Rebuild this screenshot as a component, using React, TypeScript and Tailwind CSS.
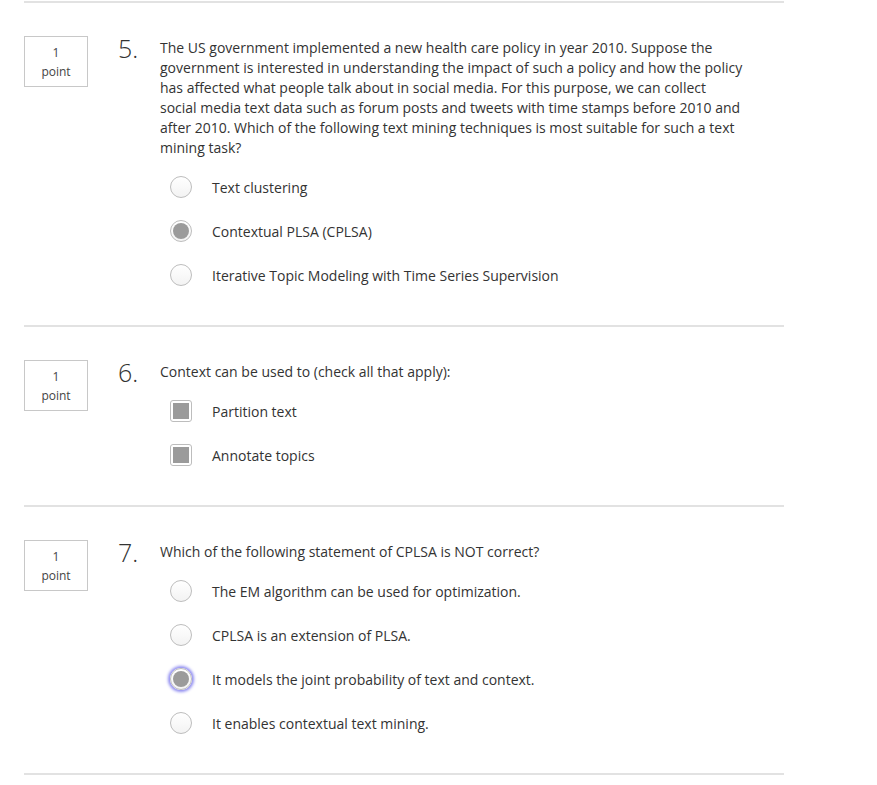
type Option = { label: string; checked?: boolean; focused?: boolean };
type Question = {
  n: number;
  text: string;
  kind: "radio" | "checkbox";
  options: Option[];
};

const questions: Question[] = [
  {
    n: 5,
    text: "The US government implemented a new health care policy in year 2010. Suppose the government is interested in understanding the impact of such a policy and how the policy has affected what people talk about in social media. For this purpose, we can collect social media text data such as forum posts and tweets with time stamps before 2010 and after 2010. Which of the following text mining techniques is most suitable for such a text mining task?",
    kind: "radio",
    options: [
      { label: "Text clustering" },
      { label: "Contextual PLSA (CPLSA)", checked: true },
      { label: "Iterative Topic Modeling with Time Series Supervision" },
    ],
  },
  {
    n: 6,
    text: "Context can be used to (check all that apply):",
    kind: "checkbox",
    options: [
      { label: "Partition text", checked: true },
      { label: "Annotate topics", checked: true },
    ],
  },
  {
    n: 7,
    text: "Which of the following statement of CPLSA is NOT correct?",
    kind: "radio",
    options: [
      { label: "The EM algorithm can be used for optimization." },
      { label: "CPLSA is an extension of PLSA." },
      { label: "It models the joint probability of text and context.", checked: true, focused: true },
      { label: "It enables contextual text mining." },
    ],
  },
];

function Radio({ checked, focused }: { checked?: boolean; focused?: boolean }) {
  return (
    <span
      className={
        "flex h-[22px] w-[22px] items-center justify-center rounded-full border border-[#bdbdbd] bg-gradient-to-b from-white to-[#f3f3f3] " +
        (focused ? "shadow-[0_0_3px_2px_#8f8cf0]" : "")
      }
    >
      {checked && <span className="h-4 w-4 rounded-full bg-[#9b9b9b]" />}
    </span>
  );
}

function Checkbox({ checked }: { checked?: boolean }) {
  return (
    <span className="flex h-[22px] w-[22px] items-center justify-center rounded-[3px] border border-[#bdbdbd] bg-white">
      {checked && <span className="h-4 w-4 bg-[#9b9b9b]" />}
    </span>
  );
}

function QuestionBlock({ q, last }: { q: Question; last: boolean }) {
  return (
    <div className={"border-t-2 border-[#e2e2e2] pt-[34px] pb-[28px] " + (last ? "border-b-2" : "")}>
      <div className="flex">
        <div className="-mt-px flex h-[51px] w-[64px] shrink-0 flex-col items-center justify-center border border-[#c8c8c8] text-[12px] leading-[19px] text-[#444]">
          <span>1</span>
          <span>point</span>
        </div>
        <div className="ml-[30px] w-[42px] shrink-0 -mt-[3px] text-[25px] font-light leading-[28px] text-[#333]">
          {q.n}.
        </div>
        <div className="w-[586px] pt-px">
          <p className="text-[14px] leading-[20px] text-[#333]">{q.text}</p>
          <div className="mt-[7px] pl-[10px]">
            {q.options.map((o) => (
              <div key={o.label} className="flex h-[44px] items-center gap-5">
                {q.kind === "radio" ? (
                  <Radio checked={o.checked} focused={o.focused} />
                ) : (
                  <Checkbox checked={o.checked} />
                )}
                <span className="text-[14px] text-[#333]">{o.label}</span>
              </div>
            ))}
          </div>
        </div>
      </div>
    </div>
  );
}

export default function App() {
  return (
    <div className="min-h-[785px] bg-white font-['Open_Sans',sans-serif]">
      <div className="ml-[24px] w-[760px] pt-px">
        {questions.map((q, i) => (
          <QuestionBlock key={q.n} q={q} last={i === questions.length - 1} />
        ))}
      </div>
    </div>
  );
}
